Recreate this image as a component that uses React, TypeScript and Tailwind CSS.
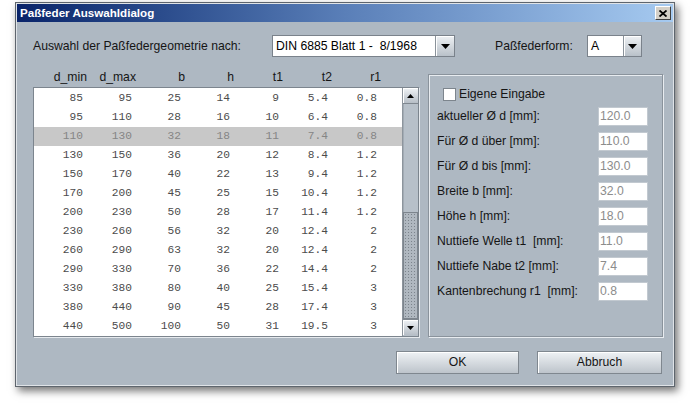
import React from "react";

const rows: string[][] = [
  ["85", "95", "25", "14", "9", "5.4", "0.8"],
  ["95", "110", "28", "16", "10", "6.4", "0.8"],
  ["110", "130", "32", "18", "11", "7.4", "0.8"],
  ["130", "150", "36", "20", "12", "8.4", "1.2"],
  ["150", "170", "40", "22", "13", "9.4", "1.2"],
  ["170", "200", "45", "25", "15", "10.4", "1.2"],
  ["200", "230", "50", "28", "17", "11.4", "1.2"],
  ["230", "260", "56", "32", "20", "12.4", "2"],
  ["260", "290", "63", "32", "20", "12.4", "2"],
  ["290", "330", "70", "36", "22", "14.4", "2"],
  ["330", "380", "80", "40", "25", "15.4", "3"],
  ["380", "440", "90", "45", "28", "17.4", "3"],
  ["440", "500", "100", "50", "31", "19.5", "3"],
];

const headers = ["d_min", "d_max", "b", "h", "t1", "t2", "r1"];

const fields: [string, string][] = [
  ["aktueller Ø d [mm]:", "120.0"],
  ["Für Ø d über [mm]:", "110.0"],
  ["Für Ø d bis [mm]:", "130.0"],
  ["Breite b [mm]:", "32.0"],
  ["Höhe h [mm]:", "18.0"],
  ["Nuttiefe Welle t1\u00a0 [mm]:", "11.0"],
  ["Nuttiefe Nabe t2 [mm]:", "7.4"],
  ["Kantenbrechung r1\u00a0 [mm]:", "0.8"],
];

function DownTri() {
  return (
    <svg width="9" height="5" viewBox="0 0 9 5">
      <polygon points="0,0 9,0 4.5,5" fill="#000" />
    </svg>
  );
}

function SmallTri({ up }: { up?: boolean }) {
  return (
    <svg width="7" height="4" viewBox="0 0 7 4">
      {up ? (
        <polygon points="0,4 7,4 3.5,0" fill="#000" />
      ) : (
        <polygon points="0,0 7,0 3.5,4" fill="#000" />
      )}
    </svg>
  );
}

function Combo({ text, width, textWidth }: { text: string; width: string; textWidth: string }) {
  return (
    <div className={`flex h-[22px] ${width} border border-[#7a828b]`}>
      <div className={`${textWidth} bg-white flex items-center pl-[3px] text-[12.2px] text-black whitespace-pre`}>
        {text}
      </div>
      <div className="flex-1 flex items-center justify-center border-l border-[#8a929a] bg-gradient-to-b from-[#eef1f4] to-[#b9c1c9] shadow-[inset_1px_1px_0_#ffffff]">
        <DownTri />
      </div>
    </div>
  );
}

export default function App() {
  return (
    <div
      className="w-[691px] h-[403px] bg-white pl-[15px] pt-[2px] overflow-hidden"
      style={{ fontFamily: '"Liberation Sans", Arial, sans-serif' }}
    >
      <div className="w-[660px] h-[385px] border border-[#5e656d] bg-[#dfe3e7] p-[1px] shadow-[3px_4px_8px_rgba(0,0,0,0.55)] flex flex-col">
        {/* Title bar */}
        <div className="h-[18px] flex items-center justify-between bg-gradient-to-r from-[#0a246a] via-[#5a7fb8] to-[#a6caf0] pl-[3px] pr-[2px]">
          <span className="text-white font-bold text-[11.6px] leading-none">Paßfeder Auswahldialog</span>
          <div className="w-[16px] h-[14px] bg-[#d4d0c8] border border-t-white border-l-white border-r-[#404040] border-b-[#404040] flex items-center justify-center">
            <svg width="8" height="7" viewBox="0 0 8 7">
              <line x1="0.5" y1="0.5" x2="7.5" y2="6.5" stroke="#000" strokeWidth="1.8" />
              <line x1="7.5" y1="0.5" x2="0.5" y2="6.5" stroke="#000" strokeWidth="1.8" />
            </svg>
          </div>
        </div>

        {/* Body */}
        <div className="flex-1 bg-[#aeb8c2] pl-[16px] pt-[13px] text-[#151515]">
          {/* Row 1 */}
          <div className="flex items-center h-[22px]">
            <div className="w-[239px] text-[12.2px]">Auswahl der Paßfedergeometrie nach:</div>
            <Combo text="DIN 6885 Blatt 1 -  8/1968" width="w-[183px]" textWidth="w-[162px]" />
            <div className="ml-[40px] w-[92px] text-[12.2px]">Paßfederform:</div>
            <Combo text="A" width="w-[55px]" textWidth="w-[35px]" />
          </div>

          {/* Main area */}
          <div className="flex mt-[10px]">
            {/* Left: table */}
            <div className="w-[386px] flex flex-col">
              <div className="h-[20px] pl-[5px] grid grid-cols-[49px_49px_49px_49px_49px_49px_49px] items-center text-[12.2px] text-[#151515]">
                {headers.map((h) => (
                  <div key={h} className="text-right">
                    {h}
                  </div>
                ))}
              </div>
              <div className="h-[250px] border border-[#7c858e] shadow-[1px_1px_0_#e6eaee] flex">
                <div
                  className="flex-1 bg-white pt-[1px]"
                  style={{ fontFamily: '"Liberation Mono", "Courier New", monospace' }}
                >
                  {rows.map((r, i) => {
                    const sel = i === 2;
                    return (
                      <div
                        key={i}
                        className={`h-[19px] grid grid-cols-[49px_49px_49px_49px_49px_49px_49px] items-center text-[11.2px] ${
                          sel ? "bg-[#c8c8c8] text-[#858585]" : "text-[#4c4c4c]"
                        }`}
                      >
                        {r.map((c, j) => (
                          <div key={j} className="text-right">
                            {c}
                          </div>
                        ))}
                      </div>
                    );
                  })}
                </div>
                {/* Scrollbar */}
                <div className="w-[16px] flex flex-col bg-[#b7c0c9] border-l border-[#8d959d]">
                  <div className="h-[16px] flex items-center justify-center bg-gradient-to-b from-[#f0f3f6] to-[#b6bec6] border-b border-[#7f878f] shadow-[inset_1px_1px_0_#ffffff]">
                    <SmallTri up />
                  </div>
                  <div className="h-[108px] shadow-[inset_1px_0_0_#a2abb4]" />
                  <div className="h-[107px] border border-[#7d858d] bg-[#b0b8c0] bg-[radial-gradient(circle,#7c848c_0.7px,transparent_0.9px)] bg-[length:3px_3px]" />
                  <div className="h-[16px] flex items-center justify-center bg-gradient-to-b from-[#f0f3f6] to-[#b6bec6] border-t border-[#7f878f] shadow-[inset_1px_1px_0_#ffffff]">
                    <SmallTri />
                  </div>
                </div>
              </div>
            </div>

            {/* Right panel */}
            <div className="ml-[9px] mt-[7px] w-[235px] h-[263px] border border-[#8a939c] shadow-[inset_1px_1px_0_#e8ecf0,1px_1px_0_#e8ecf0] pt-[13px]">
              <div className="flex items-center h-[13px] pl-[14px]">
                <div className="w-[13px] h-[13px] bg-white border border-[#7d858d]" />
                <span className="ml-[3px] text-[12.2px]">Eigene Eingabe</span>
              </div>
              <div className="mt-[6px] flex flex-col gap-[6px]">
                {fields.map(([l, v]) => (
                  <div key={l} className="flex items-center justify-between h-[19px] pl-[8px] pr-[14px]">
                    <span className="text-[12.2px] whitespace-pre">{l}</span>
                    <div className="w-[50px] h-[19px] bg-white border border-[#c2c9d0] flex items-center pl-[1px] text-[12.2px] text-[#8c8c8c]">
                      {v}
                    </div>
                  </div>
                ))}
              </div>
            </div>
          </div>

          {/* Buttons */}
          <div className="flex mt-[14px] ml-[363px] gap-[18px]">
            <div className="w-[123px] h-[23px] flex items-center justify-center border border-[#7f878f] bg-gradient-to-b from-[#eff2f5] to-[#bdc4cb] shadow-[inset_1px_1px_0_#ffffff] text-[12.2px]">
              OK
            </div>
            <div className="w-[125px] h-[23px] flex items-center justify-center border border-[#7f878f] bg-gradient-to-b from-[#eff2f5] to-[#bdc4cb] shadow-[inset_1px_1px_0_#ffffff] text-[12.2px]">
              Abbruch
            </div>
          </div>
        </div>
      </div>
    </div>
  );
}
